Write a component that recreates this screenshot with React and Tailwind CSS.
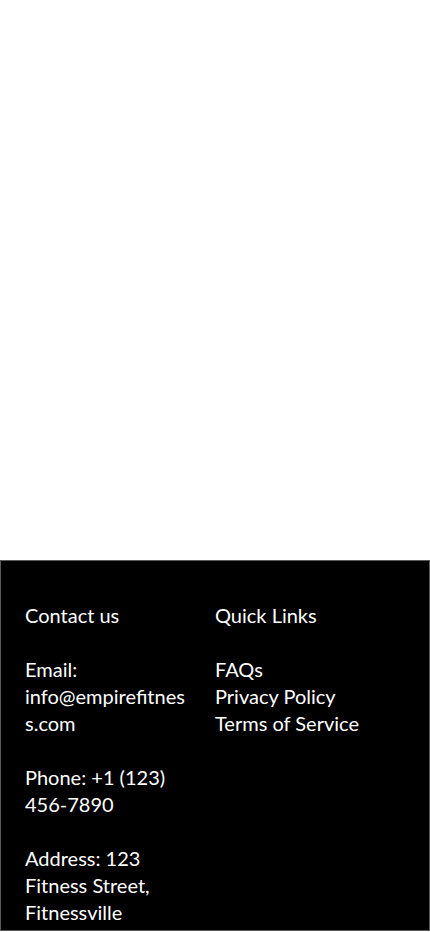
import React from "react";

export default function App() {
    return (
        <div className="min-h-screen bg-white font-['Lato',sans-serif]">
            <div className="h-[560px]" />
            <footer className="border border-[#5a5a5a] bg-black px-6 pt-[41px] pb-1 text-[20px] leading-[27px] text-white">
                <div className="grid grid-cols-2">
                    <div className="pr-[26px] [overflow-wrap:break-word]">
                        <h3 className="mb-[27px]">Contact us</h3>
                        <p className="mb-[27px]">Email: info@empirefitness.com</p>
                        <p className="mb-[27px]">Phone: +1 (123) 456-7890</p>
                        <p>Address: 123 Fitness Street, Fitnessville</p>
                    </div>
                    <div>
                        <h3 className="mb-[27px]">Quick Links</h3>
                        <ul>
                            <li>FAQs</li>
                            <li>Privacy Policy</li>
                            <li>Terms of Service</li>
                        </ul>
                    </div>
                </div>
            </footer>
        </div>
    );
}
